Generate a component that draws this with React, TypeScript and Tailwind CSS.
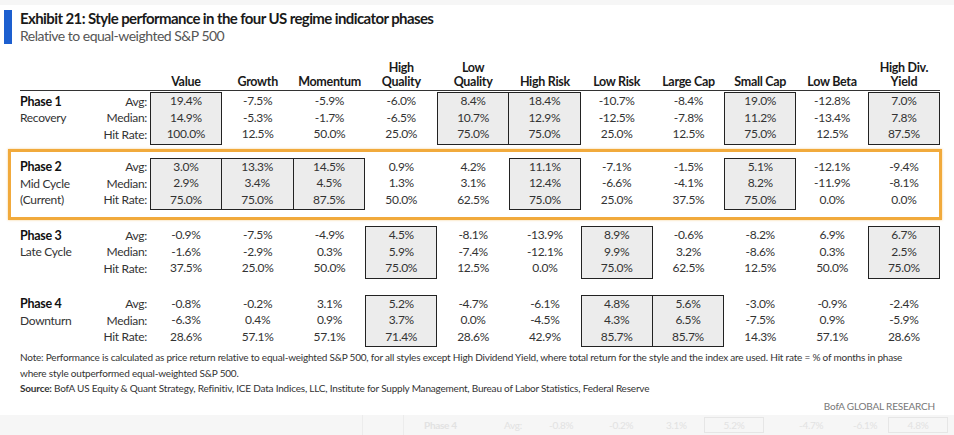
import React from "react"

type Cell = { v: [string, string, string]; box?: boolean }

interface Phase {
  name: string
  sub: string[]
  cells: Cell[]
}

const headers: string[][] = [
  ["Value"],
  ["Growth"],
  ["Momentum"],
  ["High", "Quality"],
  ["Low", "Quality"],
  ["High Risk"],
  ["Low Risk"],
  ["Large Cap"],
  ["Small Cap"],
  ["Low Beta"],
  ["High Div.", "Yield"],
]

const phases: Phase[] = [
  {
    name: "Phase 1",
    sub: ["Recovery"],
    cells: [
      { v: ["19.4%", "14.9%", "100.0%"], box: true },
      { v: ["-7.5%", "-5.3%", "12.5%"] },
      { v: ["-5.9%", "-1.7%", "50.0%"] },
      { v: ["-6.0%", "-6.5%", "25.0%"] },
      { v: ["8.4%", "10.7%", "75.0%"], box: true },
      { v: ["18.4%", "12.9%", "75.0%"], box: true },
      { v: ["-10.7%", "-12.5%", "25.0%"] },
      { v: ["-8.4%", "-7.8%", "12.5%"] },
      { v: ["19.0%", "11.2%", "75.0%"], box: true },
      { v: ["-12.8%", "-13.4%", "12.5%"] },
      { v: ["7.0%", "7.8%", "87.5%"], box: true },
    ],
  },
  {
    name: "Phase 2",
    sub: ["Mid Cycle", "(Current)"],
    cells: [
      { v: ["3.0%", "2.9%", "75.0%"], box: true },
      { v: ["13.3%", "3.4%", "75.0%"], box: true },
      { v: ["14.5%", "4.5%", "87.5%"], box: true },
      { v: ["0.9%", "1.3%", "50.0%"] },
      { v: ["4.2%", "3.1%", "62.5%"] },
      { v: ["11.1%", "12.4%", "75.0%"], box: true },
      { v: ["-7.1%", "-6.6%", "25.0%"] },
      { v: ["-1.5%", "-4.1%", "37.5%"] },
      { v: ["5.1%", "8.2%", "75.0%"], box: true },
      { v: ["-12.1%", "-11.9%", "0.0%"] },
      { v: ["-9.4%", "-8.1%", "0.0%"] },
    ],
  },
  {
    name: "Phase 3",
    sub: ["Late Cycle"],
    cells: [
      { v: ["-0.9%", "-1.6%", "37.5%"] },
      { v: ["-7.5%", "-2.9%", "25.0%"] },
      { v: ["-4.9%", "0.3%", "50.0%"] },
      { v: ["4.5%", "5.9%", "75.0%"], box: true },
      { v: ["-8.1%", "-7.4%", "12.5%"] },
      { v: ["-13.9%", "-12.1%", "0.0%"] },
      { v: ["8.9%", "9.9%", "75.0%"], box: true },
      { v: ["-0.6%", "3.2%", "62.5%"] },
      { v: ["-8.2%", "-8.6%", "12.5%"] },
      { v: ["6.9%", "0.3%", "50.0%"] },
      { v: ["6.7%", "2.5%", "75.0%"], box: true },
    ],
  },
  {
    name: "Phase 4",
    sub: ["Downturn"],
    cells: [
      { v: ["-0.8%", "-6.3%", "28.6%"] },
      { v: ["-0.2%", "0.4%", "57.1%"] },
      { v: ["3.1%", "0.9%", "57.1%"] },
      { v: ["5.2%", "3.7%", "71.4%"], box: true },
      { v: ["-4.7%", "0.0%", "28.6%"] },
      { v: ["-6.1%", "-4.5%", "42.9%"] },
      { v: ["4.8%", "4.3%", "85.7%"], box: true },
      { v: ["5.6%", "6.5%", "85.7%"], box: true },
      { v: ["-3.0%", "-7.5%", "14.3%"] },
      { v: ["-0.9%", "0.9%", "57.1%"] },
      { v: ["-2.4%", "-5.9%", "28.6%"] },
    ],
  },
]

const rowLabels = ["Avg:", "Median:", "Hit Rate:"]

function PhaseRows({ phase }: { phase: Phase }) {
  return (
    <div className="grid grid-cols-[130px_repeat(11,71.8px)]">
      <div className="flex justify-between py-[1.5px]">
        <div>
          <div className="h-[16.5px] leading-[16.5px] font-bold text-[12.5px] text-[#111]">{phase.name}</div>
          {phase.sub.map((s) => (
            <div key={s} className="h-[16.5px] leading-[16.5px] text-[#333]">
              {s}
            </div>
          ))}
        </div>
        <div className="pr-[3px] text-right">
          {rowLabels.map((l) => (
            <div key={l} className="h-[16.5px] leading-[16.5px] text-[#333]">
              {l}
            </div>
          ))}
        </div>
      </div>
      {phase.cells.map((c, i) => {
        const prevBox = i > 0 && phase.cells[i - 1].box
        const cls = c.box
          ? prevBox
            ? "border-y-[1.5px] border-r-[1.5px] border-l-0 border-[#222] bg-[#ececec]"
            : "border-[1.5px] border-[#222] bg-[#ececec]"
          : "border-[1.5px] border-transparent"
        return (
          <div key={i} className={cls}>
            {c.v.map((v, j) => (
              <div key={j} className="h-[16.5px] leading-[16.5px] text-center text-[#333]">
                {v}
              </div>
            ))}
          </div>
        )
      })}
    </div>
  )
}

export default function App() {
  return (
    <div className="w-[954px] h-[435px] bg-white overflow-hidden flex flex-col font-['Lato',sans-serif] text-[12px] tracking-[-0.3px]">
      <div className="h-[5px] bg-[#f6f6f6]" />
      <div className="mt-[5px] flex">
        <div className="ml-[4px] w-[8px] h-[34px] bg-[#1d5fcf]" />
        <div className="ml-[8px]">
          <div className="text-[15px] leading-[17px] font-bold text-[#1a1a1a] tracking-[-0.6px]">
            Exhibit 21: Style performance in the four US regime indicator phases
          </div>
          <div className="text-[14px] leading-[17px] text-[#555] tracking-[-0.5px]">
            Relative to equal-weighted S&amp;P 500
          </div>
        </div>
      </div>

      <div className="ml-[20px] w-[920px] mt-[14px]">
        <div className="grid grid-cols-[130px_repeat(11,71.8px)] h-[33px] items-end border-b border-[#333] pb-[1px]">
          <div />
          {headers.map((h) => (
            <div key={h.join(" ")} className="text-center font-bold text-[12.5px] leading-[14px] text-[#1a1a1a]">
              {h.map((l) => (
                <div key={l}>{l}</div>
              ))}
            </div>
          ))}
        </div>
        <div className="mt-[1px]">
          <PhaseRows phase={phases[0]} />
        </div>
      </div>

      <div className="ml-[8px] w-[934px] mt-[4px] border-[3px] border-[#f1aa3c] pl-[9px] pt-[6px] pb-[7px] shadow-[0_0_2px_rgba(240,170,60,0.6)]">
        <PhaseRows phase={phases[1]} />
      </div>

      <div className="ml-[20px] w-[920px] mt-[6px]">
        <PhaseRows phase={phases[2]} />
        <div className="mt-[16px]">
          <PhaseRows phase={phases[3]} />
        </div>
      </div>

      <div className="ml-[20px] mt-[3px] text-[10px] leading-[15.5px] text-[#333] tracking-[-0.2px]">
        <div>
          Note: Performance is calculated as price return relative to equal-weighted S&amp;P 500, for all styles except High Dividend Yield, where total return for the style and the index are used. Hit rate = % of months in phase
        </div>
        <div>where style outperformed equal-weighted S&amp;P 500.</div>
        <div>
          <span className="font-bold">Source:</span> BofA US Equity &amp; Quant Strategy, Refinitiv, ICE Data Indices, LLC, Institute for Supply Management, Bureau of Labor Statistics, Federal Reserve
        </div>
      </div>

      <div className="mt-[2px] pr-[19px] text-right text-[10px] leading-[14px] text-[#777] tracking-[-0.2px]">
        BofA GLOBAL RESEARCH
      </div>

      <div className="mt-auto h-[20px] bg-[#f6f6f6] flex items-center text-[10px] text-[#e2e2e2]">
        <div className="ml-[362px] w-px h-full bg-[#ececec]" />
        <div className="ml-[40px] w-px h-full bg-[#ececec]" />
        <div className="ml-[20px] w-[80px] font-bold">Phase 4</div>
        <div className="w-[45px]">Avg:</div>
        <div className="w-[60px]">-0.8%</div>
        <div className="w-[57px]">-0.2%</div>
        <div className="w-[38px]">3.1%</div>
        <div className="w-[60px] h-[16px] border border-[#e6e6e6] text-center leading-[14px]">5.2%</div>
        <div className="ml-[35px] w-[54px]">-4.7%</div>
        <div className="w-[35px]">-6.1%</div>
        <div className="w-[60px] h-[16px] border border-[#e6e6e6] text-center leading-[14px]">4.8%</div>
      </div>
    </div>
  )
}
